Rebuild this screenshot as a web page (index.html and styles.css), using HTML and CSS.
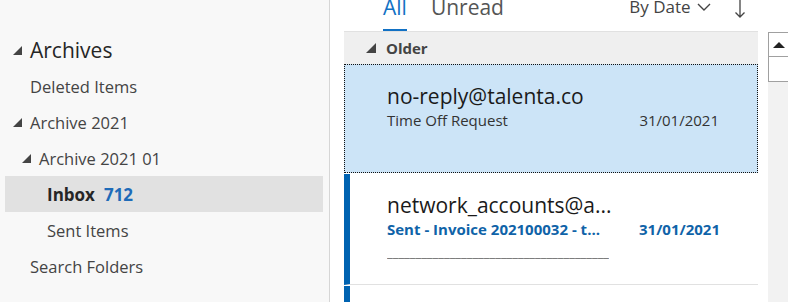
FILE: index.html
```html
<!DOCTYPE html>
<html lang="en">
<head>
  <meta charset="UTF-8">
  <title>Mail</title>
  <link rel="stylesheet" href="styles.css">
</head>
<body>
  <div class="app">
    <!-- Folder pane -->
    <div class="folders">
      <div class="folder root"><span class="tri"></span>Archives</div>
      <div class="folder lvl1">Deleted Items</div>
      <div class="folder"><span class="tri"></span>Archive 2021</div>
      <div class="folder lvl1"><span class="tri"></span>Archive 2021 01</div>
      <div class="folder lvl2 active"><b>Inbox</b><span class="count">712</span></div>
      <div class="folder lvl2">Sent Items</div>
      <div class="folder lvl1">Search Folders</div>
    </div>

    <!-- Message list -->
    <div class="list">
      <div class="list-head">
        <span class="tab current">All</span>
        <span class="tab">Unread</span>
        <span class="sort">By Date
          <svg width="14" height="10" viewBox="0 0 14 10"><path d="M1 2 L7 8 L13 2" fill="none" stroke="#444" stroke-width="1.4"/></svg>
        </span>
        <svg class="arrow" width="10" height="20" viewBox="0 0 10 20"><path d="M5 0 V19 M0.5 14.5 L5 19 L9.5 14.5" fill="none" stroke="#444" stroke-width="1.3"/></svg>
      </div>
      <div class="group"><span class="tri small"></span>Older</div>
      <div class="mail selected">
        <div class="from">no-reply@talenta.co</div>
        <div class="line">
          <span class="subject">Time Off Request</span>
          <span class="date">31/01/2021</span>
        </div>
      </div>
      <div class="mail unread">
        <div class="from">network_accounts@a...</div>
        <div class="line">
          <span class="subject">Sent - Invoice 202100032 - t...</span>
          <span class="date">31/01/2021</span>
        </div>
        <div class="preview">_______________________________________</div>
      </div>
      <div class="mail unread"></div>
    </div>

    <!-- Scrollbar -->
    <div class="scroll">
      <div class="scroll-top"></div>
      <div class="scroll-track">
        <div class="scroll-btn"><span class="up"></span></div>
        <div class="scroll-thumb"></div>
      </div>
    </div>
  </div>
</body>
</html>
```

FILE: styles.css
```css
body {
  margin: 0;
  font-family: "Open Sans", "Noto Sans", sans-serif;
  background: #fff;
  color: #333;
}

.app {
  display: flex;
  width: 789px;
  height: 302px;
  overflow: hidden;
}

/* Folder pane */
.folders {
  width: 330px;
  flex: none;
  background: #f8f8f8;
  border-right: 1px solid #d6d6d6;
  padding-top: 32px;
  box-sizing: border-box;
}

.folder {
  display: flex;
  align-items: center;
  height: 36px;
  margin: 0 6px 0 5px;
  padding-left: 8px;
  font-size: 16.5px;
  color: #444;
}

.folder.root {
  font-size: 21px;
  color: #262626;
}

.folder.lvl1 { padding-left: 25px; }
.folder.lvl1 .tri { margin-left: -8px; }
.folder.lvl2 { padding-left: 42px; }

.folder.active {
  background: #e1e1e1;
  color: #262626;
  font-size: 17px;
}

.count {
  margin-left: 9px;
  font-weight: bold;
  color: #1e6bb8;
}

.tri {
  width: 0;
  height: 0;
  border-left: 9px solid transparent;
  border-bottom: 9px solid #444;
  margin-right: 8px;
}

.tri.small {
  border-left-width: 10px;
  border-bottom-width: 10px;
  margin-right: 10px;
}

/* Message list */
.list {
  width: 414px;
  flex: none;
  margin-left: 14px;
}

.list-head {
  display: flex;
  align-items: flex-start;
  height: 31px;
  border-bottom: 1px solid #e1e1e1;
  font-size: 21px;
  color: #555;
}

.tab {
  line-height: 20px;
  margin-top: -3px;
  height: 34px;
  box-sizing: border-box;
}

.tab.current {
  margin-left: 39px;
  color: #1271c4;
  border-bottom: 2px solid #1271c4;
}

.tab + .tab { margin-left: 24px; }

.sort {
  margin-left: auto;
  line-height: 20px;
  margin-top: -3px;
  font-size: 17px;
  color: #444;
}

.sort svg { margin-left: 2px; vertical-align: 1px; }

.arrow {
  margin: -2px 13px 0 24px;
}

.group {
  display: flex;
  align-items: center;
  height: 32px;
  padding-left: 22px;
  background: #efefef;
  font-size: 15px;
  font-weight: bold;
  color: #444;
}

.mail {
  height: 111px;
  padding-left: 43px;
  padding-right: 38px;
  box-sizing: border-box;
  border-bottom: 1px solid #e1e1e1;
}

.mail.selected {
  height: 109px;
  background: #cce4f7;
  border: 1px dotted #111;
  padding-left: 42px;
  padding-top: 17px;
}

.mail.unread {
  border-left: 6px solid #0063b1;
  padding-left: 37px;
  padding-top: 17px;
  margin-top: 1px;
}

.from {
  font-size: 21px;
  color: #1a1a1a;
  line-height: 28px;
}

.line {
  display: flex;
  justify-content: space-between;
  font-size: 15px;
  color: #333;
}

.unread .line {
  font-weight: bold;
  color: #0f63a8;
  width: 333px;
}

.preview {
  color: #666;
  font-size: 13px;
  margin-top: 4px;
  width: 222px;
  overflow: hidden;
  white-space: nowrap;
}

/* Scrollbar */
.scroll {
  width: 20px;
  margin-left: 10px;
  flex: none;
}

.scroll-top { height: 32px; }

.scroll-track {
  height: 270px;
  background: #f2f2f2;
}

.scroll-btn, .scroll-thumb {
  height: 25px;
  border: 1px solid #a0a0a0;
  border-right: none;
  background: #fff;
  box-sizing: border-box;
  display: flex;
  align-items: center;
  justify-content: center;
}

.scroll-thumb { height: 26px; margin-top: -1px; }

.up {
  width: 0;
  height: 0;
  border-left: 6px solid transparent;
  border-right: 6px solid transparent;
  border-bottom: 6px solid #222;
}
```
